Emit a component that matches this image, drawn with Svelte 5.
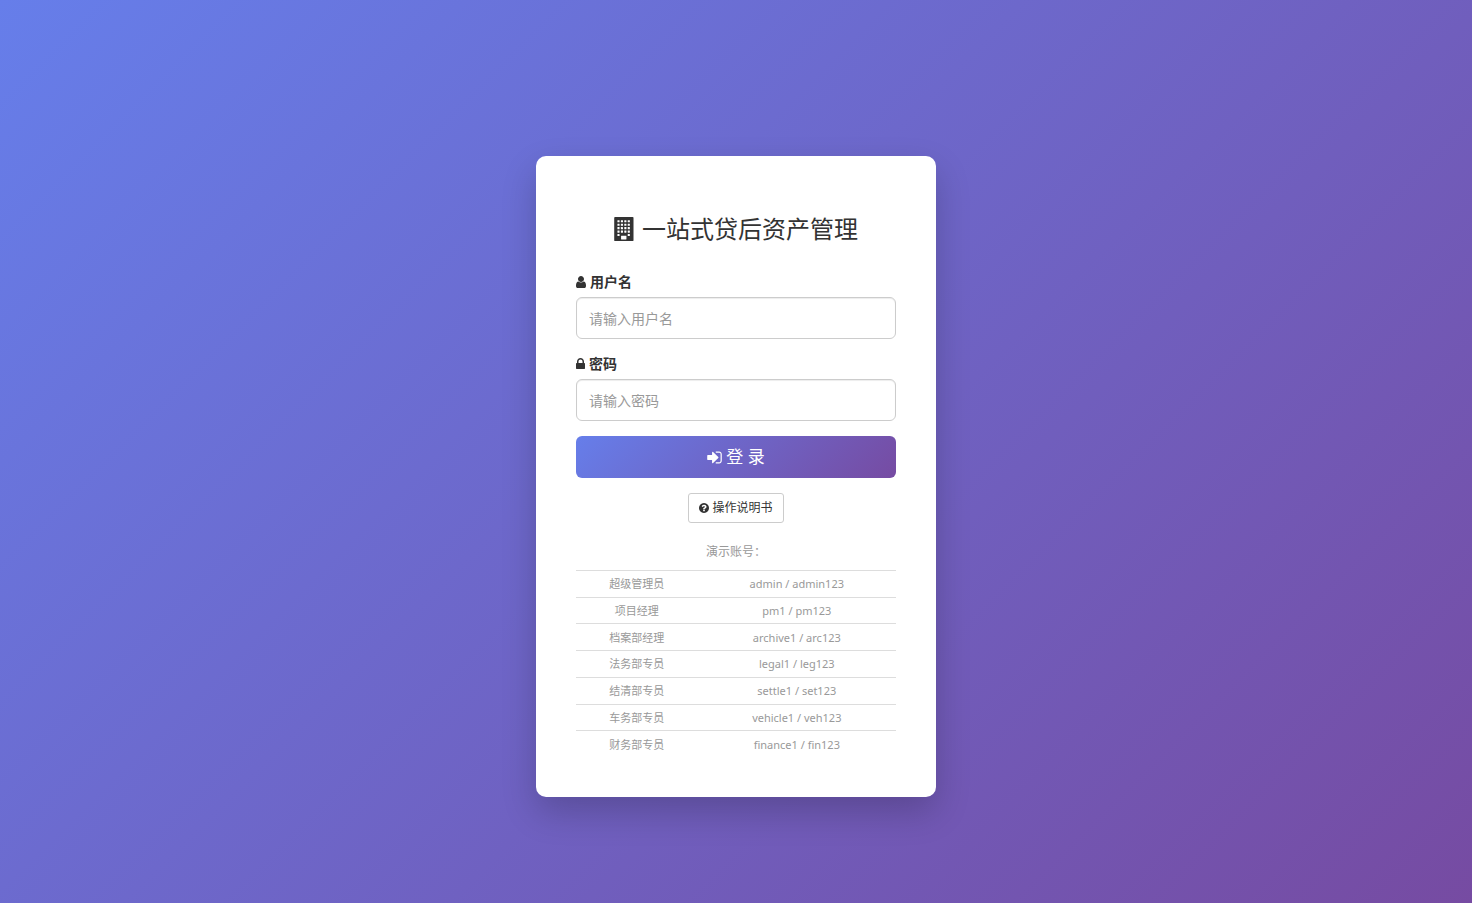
<script>
  const accounts = [
    ['超级管理员', 'admin / admin123'],
    ['项目经理', 'pm1 / pm123'],
    ['档案部经理', 'archive1 / arc123'],
    ['法务部专员', 'legal1 / leg123'],
    ['结清部专员', 'settle1 / set123'],
    ['车务部专员', 'vehicle1 / veh123'],
    ['财务部专员', 'finance1 / fin123']
  ];
  const windows = [];
  for (let row = 0; row < 5; row++) {
    for (let col = 0; col < 4; col++) {
      if (row === 4 && (col === 1 || col === 2)) continue;
      windows.push({ x: 240 + col * 256, y: 240 + row * 256 });
    }
  }
  let username = $state('');
  let password = $state('');
</script>

<main class="page">
  <section class="card">
    <h1>
      <svg class="icon-building" viewBox="0 0 1536 1792" aria-hidden="true">
        <rect width="1440" height="1792" rx="64" fill="currentColor" />
        <g fill="#fff">
          {#each windows as w}
            <rect x={w.x} y={w.y} width="160" height="160" rx="24" />
          {/each}
          <rect x="512" y="1400" width="400" height="272" rx="24" />
        </g>
      </svg>
      一站式贷后资产管理
    </h1>

    <form onsubmit={(e) => e.preventDefault()}>
      <div class="group">
        <label for="username">
          <svg class="icon-user" viewBox="0 0 1280 1792" aria-hidden="true"><path d="M1280 1399q0 109-62.5 187t-150.5 78h-854q-88 0-150.5-78t-62.5-187q0-85 8.5-160.5t31.5-152 58.5-131 94-89 134.5-34.5q131 128 313 128t313-128q76 0 134.5 34.5t94 89 58.5 131 31.5 152 8.5 160.5zm-256-887q0 159-112.5 271.5t-271.5 112.5-271.5-112.5-112.5-271.5 112.5-271.5 271.5-112.5 271.5 112.5 112.5 271.5z" /></svg>
          用户名
        </label>
        <input id="username" type="text" placeholder="请输入用户名" bind:value={username} />
      </div>
      <div class="group">
        <label for="password">
          <svg class="icon-lock" viewBox="0 0 1152 1792" aria-hidden="true"><path d="M320 768h512v-192q0-106-75-181t-181-75-181 75-75 181v192zm832 96v576q0 40-28 68t-68 28h-960q-40 0-68-28t-28-68v-576q0-40 28-68t68-28h32v-192q0-184 132-316t316-132 316 132 132 316v192h32q40 0 68 28t28 68z" /></svg>
          密码
        </label>
        <input id="password" type="password" placeholder="请输入密码" bind:value={password} />
      </div>
      <button class="login" type="submit">
        <svg class="icon-login" viewBox="0 0 1536 1792" aria-hidden="true"><path d="M1184 896q0 26-19 45l-544 544q-19 19-45 19t-45-19-19-45v-288h-448q-26 0-45-19t-19-45v-384q0-26 19-45t45-19h448v-288q0-26 19-45t45-19 45 19l544 544q19 19 19 45zm352-352v704q0 119-84.5 203.5t-203.5 84.5h-320q-13 0-22.5-9.5t-9.5-22.5q0-4-1-20t-.5-26.5 3-23.5 10-19.5 20.5-6.5h320q66 0 113-47t47-113v-704q0-66-47-113t-113-47h-312l-11.5-1-11.5-3-8-5.5-7-9-2-13.5q0-4-1-20t-.5-26.5 3-23.5 10-19.5 20.5-6.5h320q119 0 203.5 84.5t84.5 203.5z" /></svg>
        登 录
      </button>
    </form>

    <a class="manual" href="#manual">
      <svg class="icon-help" viewBox="0 0 1536 1792" aria-hidden="true"><path d="M896 1376v-192q0-14-9-23t-23-9h-192q-14 0-23 9t-9 23v192q0 14 9 23t23 9h192q14 0 23-9t9-23zm256-672q0-88-55.5-163t-138.5-116-170-41q-243 0-371 213-15 24 8 42l132 100q7 6 19 6 16 0 25-12 53-68 86-92 34-24 86-24 48 0 85.5 26t37.5 59q0 38-20 61t-68 45q-63 28-115.5 86.5t-52.5 125.5v36q0 14 9 23t23 9h192q14 0 23-9t9-23q0-19 21.5-49.5t54.5-49.5q32-18 49-28.5t46-35 44.5-48 28-60.5 12.5-81zm384 192q0 209-103 385.5t-279.5 279.5-385.5 103-385.5-103-279.5-279.5-103-385.5 103-385.5 279.5-279.5 385.5-103 385.5 103 279.5 279.5 103 385.5z" /></svg>
      操作说明书
    </a>

    <p class="hint" id="accounts-title">演示账号：</p>
    <table aria-labelledby="accounts-title">
      <tbody>
        {#each accounts as [role, login]}
          <tr><td class="role">{role}</td><td>{login}</td></tr>
        {/each}
      </tbody>
    </table>
  </section>
</main>

<style>
  :global(body) {
    margin: 0;
  }
  .page,
  .page * {
    box-sizing: border-box;
  }
  .page {
    min-height: 100vh;
    padding-top: 50px;
    display: flex;
    align-items: center;
    justify-content: center;
    background: linear-gradient(135deg, #667eea 0%, #764ba2 100%);
    color: #333;
    font: 14px/20px 'Noto Sans', 'Noto Sans CJK SC', sans-serif;
  }
  .card {
    width: 100%;
    max-width: 400px;
    padding: 60px 40px 40px;
    display: flex;
    flex-direction: column;
    background: #fff;
    border-radius: 10px;
    box-shadow: 0 15px 35px rgba(0, 0, 0, 0.2);
  }
  svg {
    flex: none;
    fill: currentColor;
  }
  h1,
  label,
  .login,
  .manual {
    display: flex;
    align-items: center;
    gap: 4px;
  }
  h1 {
    justify-content: center;
    gap: 7px;
    margin: 0 0 30px;
    font-size: 24px;
    line-height: 26px;
    font-weight: 400;
  }
  .icon-building {
    width: 21px;
    height: 24px;
  }
  .icon-user {
    width: 10px;
    height: 14px;
  }
  .icon-lock {
    width: 9px;
    height: 14px;
  }
  .icon-login {
    width: 15px;
    height: 17px;
  }
  .icon-help {
    width: 10px;
    height: 12px;
  }
  .group {
    margin-bottom: 15px;
  }
  label {
    margin-bottom: 5px;
    font-weight: 700;
  }
  input {
    display: block;
    width: 100%;
    height: 42px;
    padding: 6px 12px;
    border: 1px solid #ccc;
    border-radius: 6px;
    background: #fff;
    box-shadow: inset 0 1px 1px rgba(0, 0, 0, 0.075);
    color: #555;
    font: inherit;
  }
  input::placeholder {
    color: #999;
    opacity: 1;
  }
  input:focus {
    border-color: #667eea;
    outline: none;
  }
  .login {
    justify-content: center;
    width: 100%;
    height: 42px;
    padding: 0;
    border: 0;
    border-radius: 6px;
    background: linear-gradient(135deg, #667eea 0%, #764ba2 100%);
    color: #fff;
    font: inherit;
    font-size: 17px;
    cursor: pointer;
  }
  .manual {
    align-self: center;
    gap: 3px;
    margin-top: 15px;
    padding: 5px 10px;
    border: 1px solid #ccc;
    border-radius: 3px;
    color: #333;
    font-size: 12px;
    line-height: 18px;
    text-decoration: none;
  }
  .hint {
    margin: 20px 0 10px;
    color: #999;
    font-size: 12px;
    line-height: 17px;
    text-align: center;
  }
  table {
    width: 100%;
    height: 187px;
    border-collapse: separate;
    border-spacing: 0;
    color: #999;
    font-size: 11px;
    line-height: 15px;
    text-align: center;
  }
  td {
    padding: 5px;
    border-top: 1px solid #ddd;
  }
  .role {
    width: 38%;
  }
</style>
